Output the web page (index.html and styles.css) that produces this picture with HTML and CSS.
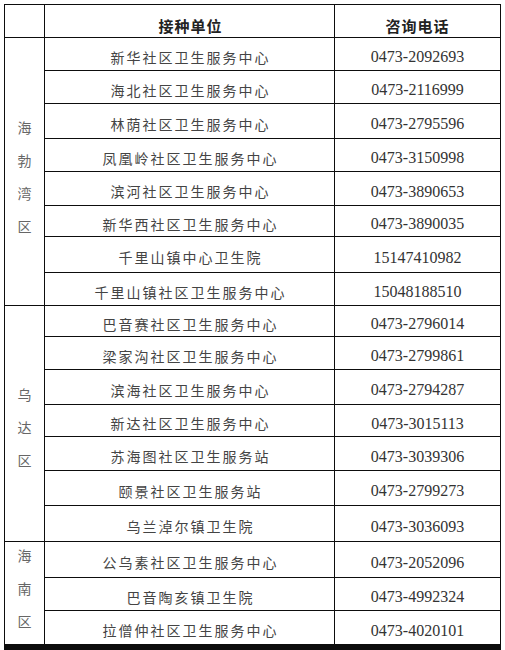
FILE: index.html
```html
<!DOCTYPE html>
<html lang="zh-CN">
<head>
<meta charset="utf-8">
<title>接种单位</title>
<link rel="stylesheet" href="styles.css">
</head>
<body>
<div class="table">
  <div class="cell head"></div>
  <div class="cell head name">接种单位</div>
  <div class="cell head phone-h">咨询电话</div>

  <div class="cell region r1"><span>海</span><span>勃</span><span>湾</span><span>区</span></div>
  <div class="cell name">新华社区卫生服务中心</div><div class="cell phone">0473-2092693</div>
  <div class="cell name">海北社区卫生服务中心</div><div class="cell phone">0473-2116999</div>
  <div class="cell name">林荫社区卫生服务中心</div><div class="cell phone">0473-2795596</div>
  <div class="cell name">凤凰岭社区卫生服务中心</div><div class="cell phone">0473-3150998</div>
  <div class="cell name">滨河社区卫生服务中心</div><div class="cell phone">0473-3890653</div>
  <div class="cell name">新华西社区卫生服务中心</div><div class="cell phone">0473-3890035</div>
  <div class="cell name">千里山镇中心卫生院</div><div class="cell phone">15147410982</div>
  <div class="cell name">千里山镇社区卫生服务中心</div><div class="cell phone">15048188510</div>

  <div class="cell region r2"><span>乌</span><span>达</span><span>区</span></div>
  <div class="cell name">巴音赛社区卫生服务中心</div><div class="cell phone">0473-2796014</div>
  <div class="cell name">梁家沟社区卫生服务中心</div><div class="cell phone">0473-2799861</div>
  <div class="cell name">滨海社区卫生服务中心</div><div class="cell phone">0473-2794287</div>
  <div class="cell name">新达社区卫生服务中心</div><div class="cell phone">0473-3015113</div>
  <div class="cell name">苏海图社区卫生服务站</div><div class="cell phone">0473-3039306</div>
  <div class="cell name">颐景社区卫生服务站</div><div class="cell phone">0473-2799273</div>
  <div class="cell name">乌兰淖尔镇卫生院</div><div class="cell phone">0473-3036093</div>

  <div class="cell region r3"><span>海</span><span>南</span><span>区</span></div>
  <div class="cell name">公乌素社区卫生服务中心</div><div class="cell phone">0473-2052096</div>
  <div class="cell name">巴音陶亥镇卫生院</div><div class="cell phone">0473-4992324</div>
  <div class="cell name">拉僧仲社区卫生服务中心</div><div class="cell phone">0473-4020101</div>
</div>
</body>
</html>
```

FILE: styles.css
```css
html, body {
  margin: 0;
  padding: 0;
  background: #ffffff;
}

body {
  font-family: "Noto Sans CJK SC", "Noto Sans", sans-serif;
  color: #444444;
}

.table {
  margin: 4px 0 0 4px;
  width: 497px;
  box-sizing: border-box;
  display: grid;
  grid-template-columns: 39px 289px 165px;
  grid-template-rows: 32px 32px 32px 34px 32px 33px 30px 35px 32px 30px 32px 34px 31px 33px 34px 35px 35px 32px 33px 33px;
  gap: 1px;
  padding: 1px;
  background: #0d0d0d;
}

.cell {
  background: #ffffff;
  display: flex;
  align-items: center;
  justify-content: center;
  box-sizing: border-box;
  padding-top: 5px;
  white-space: nowrap;
}

.name {
  font-size: 14px;
  letter-spacing: 2px;
  padding-left: 2px;
}

.phone {
  font-family: "Liberation Serif", serif;
  font-size: 16px;
  color: #333333;
  padding-top: 6px;
}

.head {
  font-weight: 700;
  font-size: 15px;
  letter-spacing: 1px;
  color: #222222;
  padding-top: 8px;
}

.phone-h {
  font-size: 15px;
}

.region {
  flex-direction: column;
  font-size: 14px;
  line-height: 33px;
  color: #666666;
  padding-top: 0;
}

.region span {
  display: block;
}

.r1 {
  grid-row: 2 / span 8;
  padding-top: 10px;
}

.r2 {
  grid-row: 10 / span 7;
  padding-top: 8px;
}

.r3 {
  grid-row: 17 / span 3;
  padding-bottom: 9px;
}
```
